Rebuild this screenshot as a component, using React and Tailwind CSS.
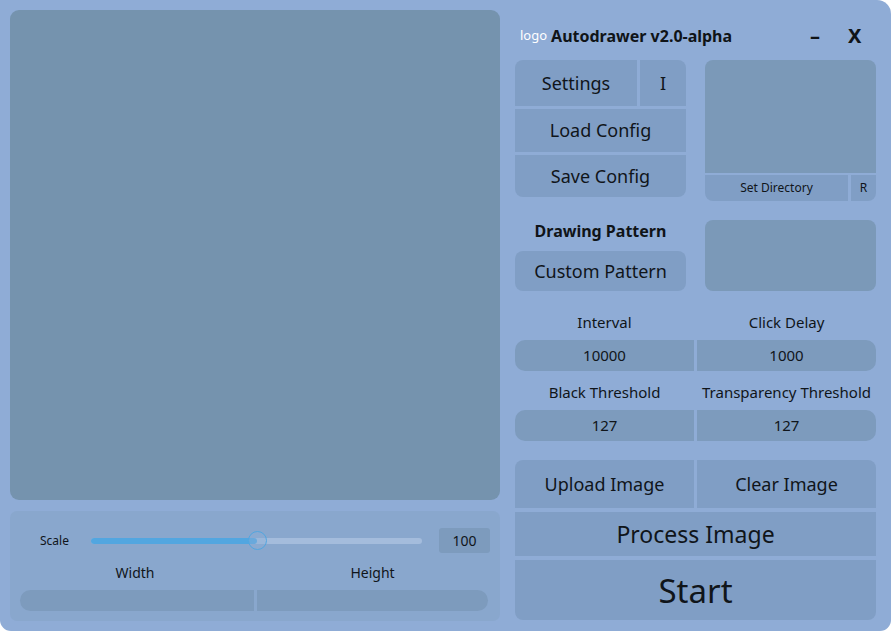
import React from 'react';

const font = { fontFamily: '"Noto Sans", "Open Sans", sans-serif' };

function Btn({ className = '', children }) {
  return (
    <button className={`flex items-center justify-center bg-[#809ec5] text-[#10151a] ${className}`}>
      {children}
    </button>
  );
}

function Field({ label, value, side }) {
  const round = side === 'l' ? 'rounded-l-[10px]' : 'rounded-r-[10px]';
  return (
    <div className="flex flex-col">
      <div className="h-[20px] flex items-center justify-center text-[15px] text-[#10151a]">{label}</div>
      <div className={`mt-[8px] h-[31px] flex items-center justify-center bg-[#7d9bbd] text-[15px] text-[#10151a] ${round}`}>
        {value}
      </div>
    </div>
  );
}

export default function App() {
  return (
    <div className="bg-white w-[891px] h-[631px]">
      <div
        className="w-[891px] h-[631px] bg-[#8facd6] rounded-tr-[14px] rounded-b-[11px] flex overflow-hidden"
        style={font}
      >
        {/* left column */}
        <div className="w-[505px] pl-[10px] pt-[10px] flex flex-col">
          <div className="w-[490px] h-[490px] rounded-[9px] bg-[#7593ae]" />
          <div className="mt-[11px] w-[490px] h-[110px] rounded-[7px] bg-[#89a7cd] px-[10px] pt-[17px]">
            <div className="flex items-center h-[25px]">
              <span className="w-[71px] pl-[20px] text-[12px] text-[#10151a]">Scale</span>
              <div className="relative w-[331px] h-[6px] rounded-full bg-[#a4bcdc]">
                <div className="absolute left-0 top-0 h-[6px] w-[166px] rounded-full bg-[#52a6e0]" />
                <div className="absolute left-[157px] top-[-7px] w-[19px] h-[19px] rounded-full border-[1.5px] border-[#52a6e0] bg-[#8dafd6]/40" />
              </div>
              <div className="ml-[17px] w-[51px] h-[25px] rounded-[3px] bg-[#7d9bbd] flex items-center justify-center text-[14px] text-[#10151a]">
                100
              </div>
            </div>
            <div className="grid grid-cols-2 mt-[8px] h-[22px] text-[14px] text-[#10151a]">
              <div className="flex items-center justify-center">
                <span className="mr-[5px]">Width</span>
              </div>
              <div className="flex items-center justify-center">
                <span>Height</span>
              </div>
            </div>
            <div className="mt-[7px] flex gap-[3px] h-[21px]">
              <div className="w-[234px] rounded-l-full bg-[#7d9bbd]" />
              <div className="w-[231px] rounded-r-full bg-[#7d9bbd]" />
            </div>
          </div>
        </div>

        {/* right column */}
        <div className="w-[361px] ml-[10px] pt-[26px] flex flex-col">
          <div className="h-[20px] flex items-center">
            <span className="ml-[5px] text-[13px] text-white">logo</span>
            <span className="ml-[4px] text-[16px] font-bold text-[#101418]">Autodrawer v2.0-alpha</span>
            <span className="ml-[78px] text-[20px] font-bold text-[#101418] leading-none">–</span>
            <span className="ml-[28px] text-[20px] font-bold text-[#101418]">X</span>
          </div>

          <div className="mt-[14px] grid grid-cols-[171px_171px] gap-x-[19px]">
            <div className="flex flex-col gap-[3px] text-[18px]">
              <div className="flex gap-[3px] h-[46px]">
                <Btn className="w-[122px] rounded-tl-[8px]">Settings</Btn>
                <Btn className="w-[46px] rounded-tr-[8px]">I</Btn>
              </div>
              <Btn className="h-[43px]">Load Config</Btn>
              <Btn className="h-[42px] rounded-b-[8px]">Save Config</Btn>
            </div>
            <div className="flex flex-col gap-[2px]">
              <div className="h-[113px] rounded-t-[8px] bg-[#7b99b8]" />
              <div className="flex gap-[3px] h-[26px] text-[12px]">
                <Btn className="w-[143px] rounded-bl-[8px]">Set Directory</Btn>
                <Btn className="w-[25px] rounded-br-[8px]">R</Btn>
              </div>
            </div>
          </div>

          <div className="mt-[19px] grid grid-cols-[171px_171px] gap-x-[19px]">
            <div className="flex flex-col">
              <div className="h-[22px] flex items-center justify-center text-[16px] font-bold text-[#101418]">
                Drawing Pattern
              </div>
              <Btn className="mt-[9px] h-[40px] rounded-[8px] text-[18px]">Custom Pattern</Btn>
            </div>
            <div className="h-[71px] rounded-[8px] bg-[#7b99b8]" />
          </div>

          <div className="mt-[21px] grid grid-cols-2 gap-x-[3px]">
            <Field label="Interval" value="10000" side="l" />
            <Field label="Click Delay" value="1000" side="r" />
          </div>
          <div className="mt-[11px] grid grid-cols-2 gap-x-[3px]">
            <Field label="Black Threshold" value="127" side="l" />
            <Field label="Transparency Threshold" value="127" side="r" />
          </div>

          <div className="mt-[19px] flex flex-col gap-[4px]">
            <div className="grid grid-cols-2 gap-x-[3px] h-[48px] text-[18px]">
              <Btn className="rounded-tl-[8px]">Upload Image</Btn>
              <Btn className="rounded-tr-[8px]">Clear Image</Btn>
            </div>
            <Btn className="h-[44px] text-[23px]">Process Image</Btn>
            <Btn className="h-[60px] text-[33px] rounded-b-[8px] pt-[2px]">Start</Btn>
          </div>
        </div>
      </div>
    </div>
  );
}
